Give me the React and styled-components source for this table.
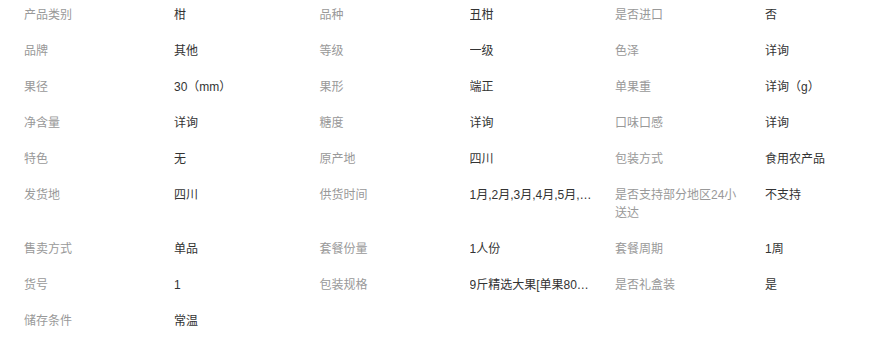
import React from "react";
import styled, { createGlobalStyle } from "styled-components";

const GlobalStyle = createGlobalStyle`
  html, body {
    margin: 0;
    padding: 0;
    background: #fff;
  }
  body {
    font-family: "Liberation Sans", Arial, "Noto Sans CJK SC", sans-serif;
    font-size: 12px;
  }
`;

const AttrGrid = styled.ul`
  list-style: none;
  margin: 0;
  padding: 0 0 0 24px;
  display: grid;
  grid-template-columns: repeat(3, 150px 145.5px);
  align-items: start;
`;

const Label = styled.li`
  padding: 6px 18px 12px 0;
  line-height: 18px;
  color: #999;
  word-break: break-all;
`;

const Value = styled.li`
  padding: 6px 23px 12px 0;
  line-height: 18px;
  color: #333;
  white-space: nowrap;
  overflow: hidden;
  text-overflow: ellipsis;
`;

const attrs = [
  ["产品类别", "柑"],
  ["品种", "丑柑"],
  ["是否进口", "否"],
  ["品牌", "其他"],
  ["等级", "一级"],
  ["色泽", "详询"],
  ["果径", "30（mm）"],
  ["果形", "端正"],
  ["单果重", "详询（g）"],
  ["净含量", "详询"],
  ["糖度", "详询"],
  ["口味口感", "详询"],
  ["特色", "无"],
  ["原产地", "四川"],
  ["包装方式", "食用农产品"],
  ["发货地", "四川"],
  ["供货时间", "1月,2月,3月,4月,5月,6月,7月,8月,9月,10月,11月,12月"],
  ["是否支持部分地区24小送达", "不支持"],
  ["售卖方式", "单品"],
  ["套餐份量", "1人份"],
  ["套餐周期", "1周"],
  ["货号", "1"],
  ["包装规格", "9斤精选大果[单果80-90mm]"],
  ["是否礼盒装", "是"],
  ["储存条件", "常温"],
];

const App = () => (
  <>
    <GlobalStyle />
    <AttrGrid>
      {attrs.map(([label, value]) => (
        <React.Fragment key={label}>
          <Label>{label}</Label>
          <Value title={value}>{value}</Value>
        </React.Fragment>
      ))}
    </AttrGrid>
  </>
);

export default App;
